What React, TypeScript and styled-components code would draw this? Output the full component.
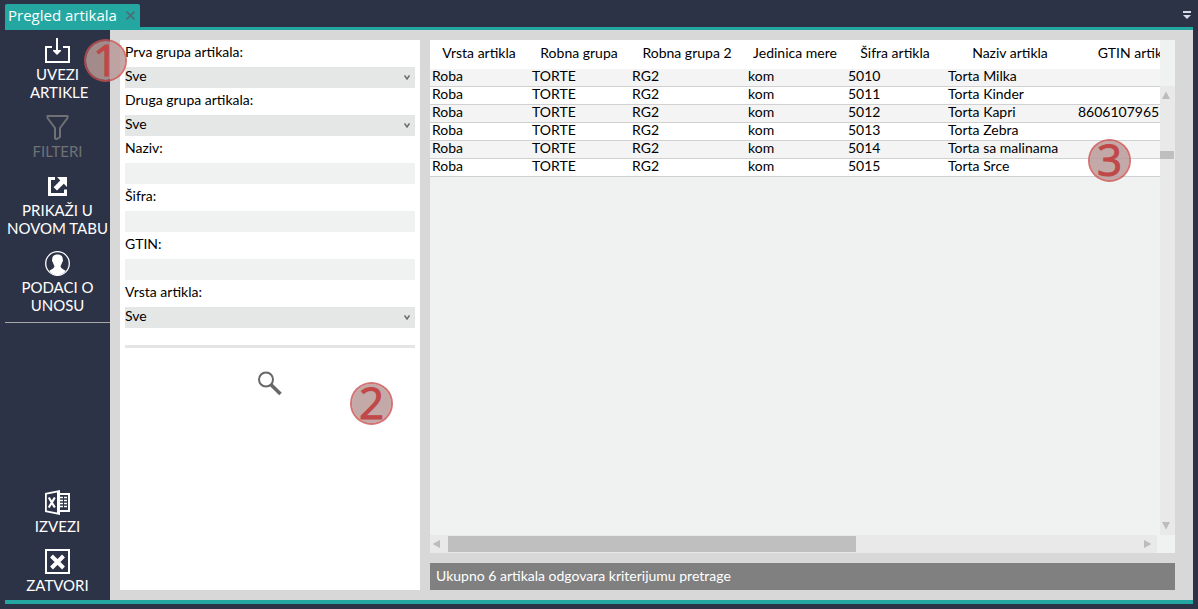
import React from "react";
import styled, { createGlobalStyle } from "styled-components";

const navy = "#2d3347";
const teal = "#24a6a1";
const textFont = `Lato, "Liberation Sans", sans-serif`;

const GlobalStyle = createGlobalStyle`
  *, *::before, *::after { box-sizing: border-box; }
  body { margin: 0; background: ${navy}; color: #000; font-family: ${textFont}; font-size: 14px; }
  button, input, select { font: inherit; color: inherit; border: 0; border-radius: 0; margin: 0; padding: 0; background: none; }
  button { cursor: pointer; }
  svg { display: block; }
`;

const Window = styled.div`
  display: flex;
  flex-direction: column;
  min-height: 100vh;
  padding: 4px 5px 5px;
`;

const TabBar = styled.header`
  display: flex;
  justify-content: space-between;
  align-items: flex-start;
  height: 26px;
  border-bottom: 3px solid ${teal};
`;

const Tab = styled.div`
  display: flex;
  align-items: center;
  gap: 9px;
  height: 23px;
  padding: 0 5px 0 3px;
  border-radius: 2px 2px 0 0;
  background: ${teal};
  color: #fff;
  font-family: "Open Sans", "Noto Sans", sans-serif;
  font-size: 15px;
  line-height: 23px;
  white-space: nowrap;
`;

const TabMenu = styled.button`
  padding: 7px 2px 0 0;
`;

const Body = styled.div`
  display: flex;
  flex: 1;
  border-bottom: 4px solid ${teal};
`;

const Sidebar = styled.nav`
  position: relative;
  display: flex;
  flex-direction: column;
  justify-content: space-between;
  flex: 0 0 105px;
  padding: 8px 0 6px;
`;

const Actions = styled.div<{ $ruled?: boolean }>`
  display: flex;
  flex-direction: column;
  gap: 14px;
  padding-bottom: ${(p) => (p.$ruled ? 8 : 0)}px;
  border-bottom: ${(p) => (p.$ruled ? "1px solid #a7a7a7" : "0")};
`;

const Action = styled.button`
  display: flex;
  flex-direction: column;
  align-items: center;
  gap: 2px;
  color: #fff;
  font-size: 15px;
  line-height: 18px;
  white-space: pre;
  &:disabled { color: #6f7175; cursor: default; }
`;

const Workspace = styled.main`
  display: flex;
  flex: 1;
  min-width: 0;
  gap: 10px;
  padding: 10px 18px 10px 10px;
  background: #d8d8d8;
`;

const Filters = styled.form`
  position: relative;
  display: flex;
  flex-direction: column;
  flex: 0 0 300px;
  padding: 0 5px;
  background: #fff;
`;

const Field = styled.div`
  display: flex;
  flex-direction: column;
  gap: 3px;
`;

const FieldLabel = styled.label`
  line-height: 24px;
`;

const SelectBox = styled.div`
  display: grid;
  align-items: center;
  background: #e5e7e6;
  > * { grid-area: 1 / 1; }
  > svg { justify-self: end; margin-right: 5px; pointer-events: none; }
`;

const Select = styled.select`
  appearance: none;
  width: 100%;
  height: 21px;
  line-height: 18px;
  padding-bottom: 3px;
`;

const TextInput = styled.input`
  width: 100%;
  height: 21px;
  background: #f0f2f1;
`;

const Rule = styled.hr`
  width: 100%;
  height: 3px;
  margin: 17px 0 23px;
  border: 0;
  background: #e5e5e5;
`;

const SearchButton = styled.button`
  align-self: center;
`;

const Results = styled.section`
  position: relative;
  display: flex;
  flex-direction: column;
  flex: 1;
  min-width: 0;
  gap: 10px;
`;

const Grid = styled.div`
  display: grid;
  grid-template-columns: minmax(0, 1fr) 15px;
  grid-template-rows: minmax(0, 1fr) 18px;
  flex: 1;
  background: #f0f2f1;
`;

const TableClip = styled.div`
  overflow: hidden;
`;

const Table = styled.table`
  width: 766px;
  table-layout: fixed;
  border-collapse: separate;
  border-spacing: 0;
  white-space: nowrap;
  background: #fff;
`;

const Head = styled.th`
  height: 29px;
  padding: 0 2px 4px 0;
  font-weight: 400;
  text-align: center;
`;

const Row = styled.tr`
  &:nth-child(odd) { background: #f4f4f4; }
`;

const Cell = styled.td`
  height: 18px;
  padding: 0 2px 3px;
  border-bottom: 1px solid #d1d1d1;
  line-height: 14px;
`;

const VerticalBar = styled.div`
  display: flex;
  flex-direction: column;
  margin-top: 46px;
  background: #e9e9e9;
`;

const HorizontalBar = styled.div`
  display: flex;
  margin-right: 3px;
  background: #e9e9e9;
`;

const Arrow = styled.button<{ $start?: boolean }>`
  display: grid;
  place-items: center ${(p) => (p.$start ? "start" : "center")};
  flex: 0 0 18px;
  padding-left: ${(p) => (p.$start ? 2 : 0)}px;
`;

const HandleTrack = styled.div<{ $vertical?: boolean }>`
  flex: 1;
  padding: ${(p) => (p.$vertical ? "47px 1px 0 0" : "1px 0")};
`;

const Handle = styled.div<{ $vertical?: boolean }>`
  width: ${(p) => (p.$vertical ? "100%" : "59%")};
  height: ${(p) => (p.$vertical ? "8px" : "100%")};
  background: #bfbfbf;
`;

const Status = styled.footer`
  height: 27px;
  padding-left: 6px;
  background: #808080;
  color: #fff;
  line-height: 26px;
`;

const Marker = styled.span<{ $x: string; $y: string }>`
  position: absolute;
  ${(p) => p.$x};
  ${(p) => p.$y};
  z-index: 1;
  width: 43px;
  height: 43px;
  border: 2px solid rgba(200, 80, 80, 0.8);
  border-radius: 50%;
  background: rgba(184, 155, 153, 0.85);
  background-clip: padding-box;
  color: #c04848;
  font-family: "Open Sans", "Noto Sans", sans-serif;
  font-size: 44px;
  -webkit-text-stroke: 1px #c04848;
  line-height: 37px;
  text-align: center;
`;

const ImportIcon = () => (
  <svg width="25" height="25" viewBox="0 0 25 25" fill="none" stroke="currentColor" strokeWidth="2">
    <path d="M7 9H1V24H24V9H18" />
    <path d="M12 0V14" />
    <path d="M8 12H16V13L12 17L8 13Z" fill="currentColor" stroke="none" />
  </svg>
);

const FunnelIcon = () => (
  <svg width="25" height="25" viewBox="0 0 25 25" fill="none" stroke="currentColor" strokeWidth="2" strokeLinejoin="round">
    <path d="M2.500 1H22.500V3L15 13V22L11 24.500L10 23V13L2.500 3Z" />
  </svg>
);

const OpenIcon = () => (
  <svg width="25" height="25" viewBox="0 0 25 25" fill="none">
    <path d="M10 4.500H4.500V20.500H20.500V15.500" stroke="currentColor" strokeWidth="3" />
    <path d="M12 3H22V13L18.800 9.800L12 16.600L8.600 13.200L15.300 6.400Z" fill="currentColor" />
  </svg>
);

const PersonIcon = () => (
  <svg width="25" height="25" viewBox="0 0 25 25">
    <circle cx="12.500" cy="12.500" r="11.800" fill="none" stroke="currentColor" strokeWidth="1.300" />
    <path d="M12.500 3.500C16 3.500 18 5.300 17.700 8.200C18.300 8.700 18 10.600 17.200 11.200C16.900 12.800 16 13.900 15.600 15C15.600 17.600 18.500 18 20.700 19.800C18.500 22.800 15.700 24.200 12.500 24.200S6.500 22.800 4.300 19.800C6.500 18 9.400 17.600 9.400 15C9 13.900 8.100 12.800 7.800 11.200C7 10.600 6.700 8.700 7.300 8.200C7 5.300 9 3.500 12.500 3.500Z" fill="currentColor" />
  </svg>
);

const ExcelIcon = () => (
  <svg width="25" height="25" viewBox="0 0 25 25">
    <path d="M14 4H24V21H14" fill="none" stroke="currentColor" strokeWidth="2" />
    <path d="M15 7.500H22M15 10.500H22M15 13.500H22M15 16.500H22" stroke="currentColor" strokeWidth="1.500" />
    <path d="M18.500 6V18" stroke={navy} strokeWidth="1" />
    <path d="M0 3L15 0V25L0 22Z" fill="currentColor" />
    <path d="M1.800 4.600L12 2.500V22.500L1.800 20.400Z" fill={navy} />
    <path d="M3.800 7.500L9.800 17.500M9.800 7.500L3.800 17.500" stroke="currentColor" strokeWidth="2.200" />
  </svg>
);

const CloseBoxIcon = () => (
  <svg width="25" height="25" viewBox="0 0 25 25" fill="none" stroke="currentColor">
    <rect x="1" y="1" width="23" height="23" strokeWidth="2" />
    <path d="M6.500 7L18.500 19M18.500 7L6.500 19" strokeWidth="4" />
  </svg>
);

const SearchIcon = () => (
  <svg width="24" height="25" viewBox="0 0 24 25" fill="none" stroke="#666768">
    <circle cx="8" cy="8.500" r="7" strokeWidth="2" />
    <path d="M12.800 13.500L22.500 23" strokeWidth="3.600" />
  </svg>
);

const Chevron = () => (
  <svg width="6" height="6" viewBox="0 0 6 6" fill="none" stroke="#6b6b6b" strokeWidth="1.500">
    <path d="M0.500 0.500L3 4L5.500 0.500" />
  </svg>
);

const turns = { up: 0, right: 90, down: 180, left: 270 };

const Triangle = ({ to }: { to: keyof typeof turns }) => (
  <svg width="8" height="8" viewBox="0 0 8 8" fill="#bcbcbc">
    <path d="M4 0.500L8 8H0Z" transform={`rotate(${turns[to]} 4 4)`} />
  </svg>
);

type ActionItem = { label: string; icon: React.ReactNode; disabled?: boolean };

const topActions: ActionItem[] = [
  { label: "UVEZI\n ARTIKLE", icon: <ImportIcon /> },
  { label: "FILTERI", icon: <FunnelIcon />, disabled: true },
  { label: "PRIKAŽI U\nNOVOM TABU", icon: <OpenIcon /> },
  { label: "PODACI O\nUNOSU", icon: <PersonIcon /> },
];

const bottomActions: ActionItem[] = [
  { label: "IZVEZI", icon: <ExcelIcon /> },
  { label: "ZATVORI", icon: <CloseBoxIcon /> },
];

const fields = [
  { id: "prva", label: "Prva grupa artikala:", select: true },
  { id: "druga", label: "Druga grupa artikala:", select: true },
  { id: "naziv", label: "Naziv:", select: false },
  { id: "sifra", label: "Šifra:", select: false },
  { id: "gtin", label: "GTIN:", select: false },
  { id: "vrsta", label: "Vrsta artikla:", select: true },
];

const columns = [
  { title: "Vrsta artikla", width: 100 },
  { title: "Robna grupa", width: 100 },
  { title: "Robna grupa 2", width: 116 },
  { title: "Jedinica mere", width: 100 },
  { title: "Šifra artikla", width: 100 },
  { title: "Naziv artikla", width: 130 },
  { title: "GTIN artikla", width: 120 },
];

const articles = [
  ["5010", "Torta Milka", ""],
  ["5011", "Torta Kinder", ""],
  ["5012", "Torta Kapri", "8606107965121"],
  ["5013", "Torta Zebra", ""],
  ["5014", "Torta sa malinama", ""],
  ["5015", "Torta Srce", ""],
];

const ActionList = ({ items, ruled }: { items: ActionItem[]; ruled?: boolean }) => (
  <Actions $ruled={ruled}>
    {items.map((item) => (
      <Action key={item.label} type="button" disabled={item.disabled}>
        {item.icon}
        <span>{item.label}</span>
      </Action>
    ))}
  </Actions>
);

export default function App() {
  return (
    <Window>
      <GlobalStyle />
      <TabBar>
        <Tab>
          Pregled artikala
          <button type="button" aria-label="Zatvori karticu">
            <svg width="9" height="9" viewBox="0 0 9 9" stroke="#4f6d78" strokeWidth="1.700">
              <path d="M0.500 0.500L8.500 8.500M8.500 0.500L0.500 8.500" />
            </svg>
          </button>
        </Tab>
        <TabMenu type="button" aria-label="Lista kartica">
          <svg width="8" height="8" viewBox="0 0 8 8" fill="#d6dbe6">
            <path d="M0 0H8V2H0ZM0 4H8L4 8Z" />
          </svg>
        </TabMenu>
      </TabBar>
      <Body>
        <Sidebar>
          <ActionList items={topActions} ruled />
          <ActionList items={bottomActions} />
          <Marker $x="right: -17px" $y="top: 9px">1</Marker>
        </Sidebar>
        <Workspace>
          <Filters>
            {fields.map((field) => (
              <Field key={field.id}>
                <FieldLabel htmlFor={field.id}>{field.label}</FieldLabel>
                {field.select ? (
                  <SelectBox>
                    <Select id={field.id}>
                      <option>Sve</option>
                    </Select>
                    <Chevron />
                  </SelectBox>
                ) : (
                  <TextInput id={field.id} type="text" />
                )}
              </Field>
            ))}
            <Rule />
            <SearchButton type="button" aria-label="Pretraži">
              <SearchIcon />
            </SearchButton>
            <Marker $x="right: 27px" $y="top: 342px">2</Marker>
          </Filters>
          <Results>
            <Grid>
              <TableClip>
                <Table>
                  <colgroup>
                    {columns.map((c) => (
                      <col key={c.title} width={c.width} />
                    ))}
                  </colgroup>
                  <thead>
                    <tr>
                      {columns.map((c) => (
                        <Head key={c.title} scope="col">{c.title}</Head>
                      ))}
                    </tr>
                  </thead>
                  <tbody>
                    {articles.map(([code, name, gtin]) => (
                      <Row key={code}>
                        {["Roba", "TORTE", "RG2", "kom", code, name, gtin].map((value, i) => (
                          <Cell key={i}>{value}</Cell>
                        ))}
                      </Row>
                    ))}
                  </tbody>
                </Table>
              </TableClip>
              <VerticalBar>
                <Arrow type="button" aria-label="Gore" $start><Triangle to="up" /></Arrow>
                <HandleTrack $vertical><Handle $vertical /></HandleTrack>
                <Arrow type="button" aria-label="Dole" $start><Triangle to="down" /></Arrow>
              </VerticalBar>
              <HorizontalBar>
                <Arrow type="button" aria-label="Levo" $start><Triangle to="left" /></Arrow>
                <HandleTrack><Handle /></HandleTrack>
                <Arrow type="button" aria-label="Desno"><Triangle to="right" /></Arrow>
              </HorizontalBar>
            </Grid>
            <Status>Ukupno 6 artikala odgovara kriterijumu pretrage</Status>
            <Marker $x="right: 44px" $y="top: 99px">3</Marker>
          </Results>
        </Workspace>
      </Body>
    </Window>
  );
}
